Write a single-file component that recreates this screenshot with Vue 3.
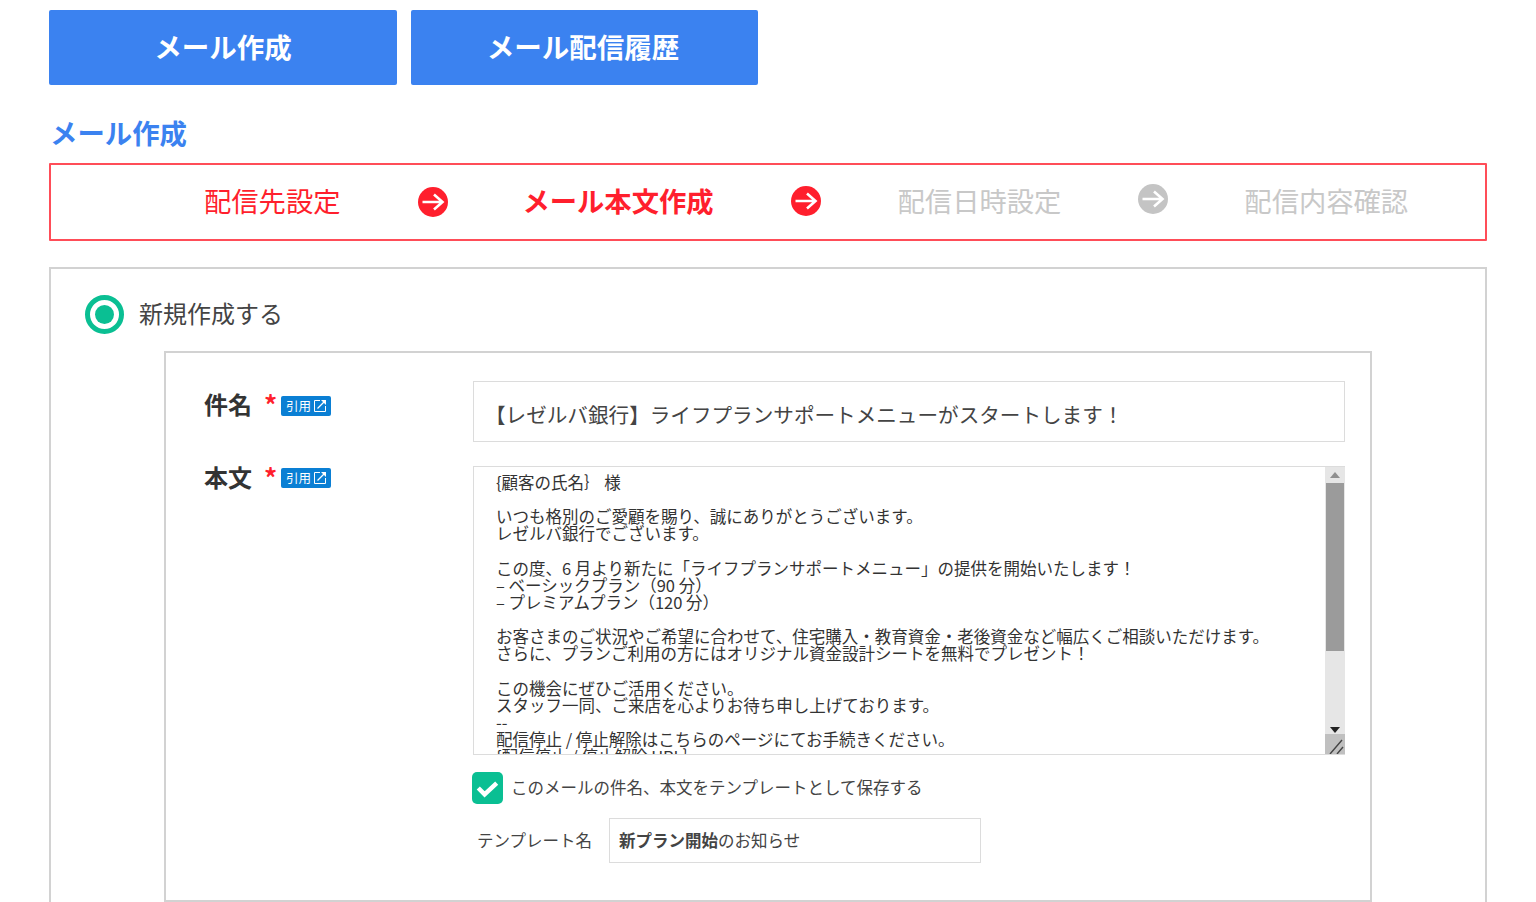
<script setup>
const tabs = ['メール作成', 'メール配信履歴']
const steps = [
  { label: '配信先設定', state: 'done', nudge: 'n1' },
  { label: 'メール本文作成', state: 'current', nudge: 'n2' },
  { label: '配信日時設定', state: 'todo', nudge: 'n3' },
  { label: '配信内容確認', state: 'todo', last: true }
]
const bodyText = `{顧客の氏名｝ 様

いつも格別のご愛顧を賜り、誠にありがとうございます。
レゼルバ銀行でございます。

この度、6 月より新たに「ライフプランサポートメニュー」の提供を開始いたします！
– ベーシックプラン（90 分）
– プレミアムプラン（120 分）

お客さまのご状況やご希望に合わせて、住宅購入・教育資金・老後資金など幅広くご相談いただけます。
さらに、プランご利用の方にはオリジナル資金設計シートを無料でプレゼント！

この機会にぜひご活用ください。
スタッフ一同、ご来店を心よりお待ち申し上げております。
--
配信停止 / 停止解除はこちらのページにてお手続きください。
{配信停止 / 停止解除 URL｝`
</script>

<template>
  <div class="page">
    <nav class="tabs">
      <button v-for="t in tabs" :key="t" class="tab">{{ t }}</button>
    </nav>
    <h1 class="title">メール作成</h1>
    <ol class="steps">
      <template v-for="s in steps" :key="s.label">
        <li class="step" :class="s.state">{{ s.label }}</li>
        <li v-if="!s.last" class="arrow" :class="[s.state, s.nudge]">
          <svg viewBox="0 0 30 30" width="30" height="30">
            <circle cx="15" cy="15" r="15" class="disc" />
            <path d="M4.5 15H24M16 7.5l8.5 7.5-8.5 7.5" fill="none" stroke="#fff" stroke-width="2.6" />
          </svg>
        </li>
      </template>
    </ol>

    <section class="panel">
      <div class="radio-row">
        <span class="radio"><span class="radio-dot"></span></span>
        <span class="radio-label">新規作成する</span>
      </div>
      <div class="form">
        <div class="field subject-field">
          <div class="label-cell">
            <span class="label">件名</span><span class="star">*</span>
            <span class="quote">引用
              <svg viewBox="0 0 14 14" width="14" height="14">
                <path d="M7 1.5H1.5v11h11V7" fill="none" stroke="#fff" stroke-width="1" />
                <path d="M4.5 9.5 11 3" stroke="#fff" stroke-width="1.2" />
                <path d="M8 1h5v5z" fill="#fff" />
              </svg>
            </span>
          </div>
          <div class="subject">【レゼルバ銀行】ライフプランサポートメニューがスタートします！</div>
        </div>
        <div class="field body-field">
          <div class="label-cell">
            <span class="label">本文</span><span class="star">*</span>
            <span class="quote">引用
              <svg viewBox="0 0 14 14" width="14" height="14">
                <path d="M7 1.5H1.5v11h11V7" fill="none" stroke="#fff" stroke-width="1" />
                <path d="M4.5 9.5 11 3" stroke="#fff" stroke-width="1.2" />
                <path d="M8 1h5v5z" fill="#fff" />
              </svg>
            </span>
          </div>
          <div class="textarea">
            <div class="text">{{ bodyText }}</div>
            <div class="scrollbar">
              <span class="sb-btn"><i class="up"></i></span>
              <span class="sb-track"><span class="sb-thumb"></span></span>
              <span class="sb-btn sb-down"><i class="down"></i></span>
              <span class="resizer">
                <svg viewBox="0 0 20 20" width="20" height="20">
                  <path d="M5 20 17 6M12 20l6-7" stroke="#444" stroke-width="1.4" fill="none" />
                </svg>
              </span>
            </div>
          </div>
        </div>
        <label class="save">
          <span class="check">
            <svg viewBox="0 0 32 32" width="32" height="32">
              <path d="M6.5 16l6.5 6.5L25.5 11" fill="none" stroke="#fff" stroke-width="4.6" />
            </svg>
          </span>
          <span class="save-text">このメールの件名、本文をテンプレートとして保存する</span>
        </label>
        <div class="template">
          <span class="template-label">テンプレート名</span>
          <div class="template-input"><b>新プラン開始</b>のお知らせ</div>
        </div>
      </div>
    </section>
  </div>
</template>

<style>
html, body { margin: 0; overflow: hidden; background: #fff; }
</style>

<style scoped>
* { box-sizing: border-box; }
.page {
  height: 902px;
  overflow: hidden;
  padding: 10px 49px 0;
  font-family: "Noto Sans CJK JP", "Noto Sans", sans-serif;
  color: #333;
}
.tabs { display: flex; gap: 14px; }
.tab {
  width: 348px;
  height: 75px;
  border: 0;
  border-radius: 2px;
  background: #3b82f0;
  color: #fff;
  font: 700 27.5px/1 "Noto Sans CJK JP", sans-serif;
  padding: 0 0 1px;
}
.tab + .tab { width: 347px; padding-right: 3px; }
.title {
  margin: 27px 0 0 1px;
  height: 51px;
  color: #3b82f0;
  font-size: 27.4px;
  line-height: 40px;
  font-weight: 700;
}
.steps {
  list-style: none;
  margin: 0;
  height: 78px;
  padding: 0 0 0 153px;
  display: flex;
  align-items: center;
  gap: 76px;
  border: 2px solid #ff4d58;
  border-radius: 1px;
}
.step { font-size: 27.3px; line-height: 40px; white-space: nowrap; margin-top: -5px; }
.step.done { color: #ff1f2d; }
.step.current { color: #ff1f2d; font-weight: 700; }
.step.todo { color: #c8c8c8; }
.arrow { height: 30px; display: flex; }
.n1 { margin: -1px -2px 0 2px; }
.n2 { margin: -3px 1px 0 1px; }
.n3 { margin: -7px 0 0 1px; }
.arrow .disc { fill: #ff1f2d; }
.arrow.todo .disc { fill: #c4c4c4; }

.panel {
  margin-top: 26px;
  height: 700px;
  border: 2px solid #d2d2d2;
  padding: 25px 113px 0 34px;
}
.radio-row { display: flex; align-items: center; gap: 15px; height: 40px; }
.radio {
  width: 39px;
  height: 39px;
  border-radius: 50%;
  border: 5px solid #0abf93;
  display: flex;
  align-items: center;
  justify-content: center;
}
.radio-dot { width: 19px; height: 19px; border-radius: 50%; background: #0abf93; }
.radio-label { font-size: 24px; line-height: 36px; color: #444; margin-top: -2px; }

.form {
  margin: 17px 0 0 79px;
  height: 551px;
  border: 2px solid #d2d2d2;
  padding: 28px 25px 0 38px;
}
.field { display: flex; }
.label-cell {
  width: 269px;
  flex: none;
  display: flex;
  align-items: flex-start;
}
.label { font-size: 24px; line-height: 46px; font-weight: 700; width: 60px; }
.star { color: #ff1f2d; font-size: 26px; line-height: 46px; font-weight: 700; width: 17px; }
.quote {
  margin-top: 15px;
  width: 50px;
  height: 20px;
  border-radius: 2px;
  background: #0a7fd4;
  color: #fff;
  font-size: 12.5px;
  line-height: 20px;
  padding-left: 5px;
  display: flex;
  align-items: center;
  gap: 2px;
  white-space: nowrap;
}
.body-field { margin-top: 24px; }
.body-field .label-cell { margin-top: -12px; }
.body-field .quote { margin-top: 14px; }
.subject {
  flex: 1;
  height: 61px;
  border: 1px solid #dcdcdc;
  padding-left: 11px;
  font-size: 20.6px;
  line-height: 64px;
  white-space: nowrap;
  color: #444;
}
.textarea {
  flex: 1;
  height: 289px;
  border: 1px solid #dcdcdc;
  border-right: 0;
  display: flex;
  overflow: hidden;
}
.text {
  flex: 1;
  padding: 7px 0 0 22px;
  font-size: 16.5px;
  line-height: 17.13px;
  white-space: pre;
  overflow: hidden;
  color: #333;
}
.scrollbar {
  width: 20px;
  flex: none;
  display: flex;
  flex-direction: column;
  background: #e6e6e6;
}
.sb-btn { height: 16px; flex: none; display: flex; align-items: center; justify-content: center; }
.sb-down { padding-top: 8px; }
.sb-btn i { width: 0; height: 0; border-left: 5px solid transparent; border-right: 5px solid transparent; }
.sb-btn .up { border-bottom: 6px solid #8f8f8f; }
.sb-btn .down { border-top: 6px solid #222; }
.sb-track { flex: 1; padding: 0 1px; }
.sb-thumb { display: block; height: 168px; background: #9b9b9b; }
.resizer { height: 20px; flex: none; background: #c0c0c0; display: block; }
.resizer svg { display: block; }
.save { display: flex; align-items: center; gap: 8px; margin: 17px 0 0 268px; height: 32px; }
.check {
  width: 31px;
  height: 32px;
  border-radius: 5px;
  background: #0abf93;
  display: flex;
}
.save-text { font-size: 16.5px; line-height: 24px; color: #444; white-space: nowrap; margin-top: -2px; }
.template { display: flex; align-items: center; margin: 14px 0 0 273px; }
.template-label { width: 132px; font-size: 16.5px; line-height: 24px; color: #444; white-space: nowrap; margin-top: -1px; }
.template-input {
  width: 372px;
  height: 45px;
  border: 1px solid #dcdcdc;
  padding-left: 9px;
  font-size: 16.5px;
  line-height: 43px;
  color: #444;
  white-space: nowrap;
}
</style>
